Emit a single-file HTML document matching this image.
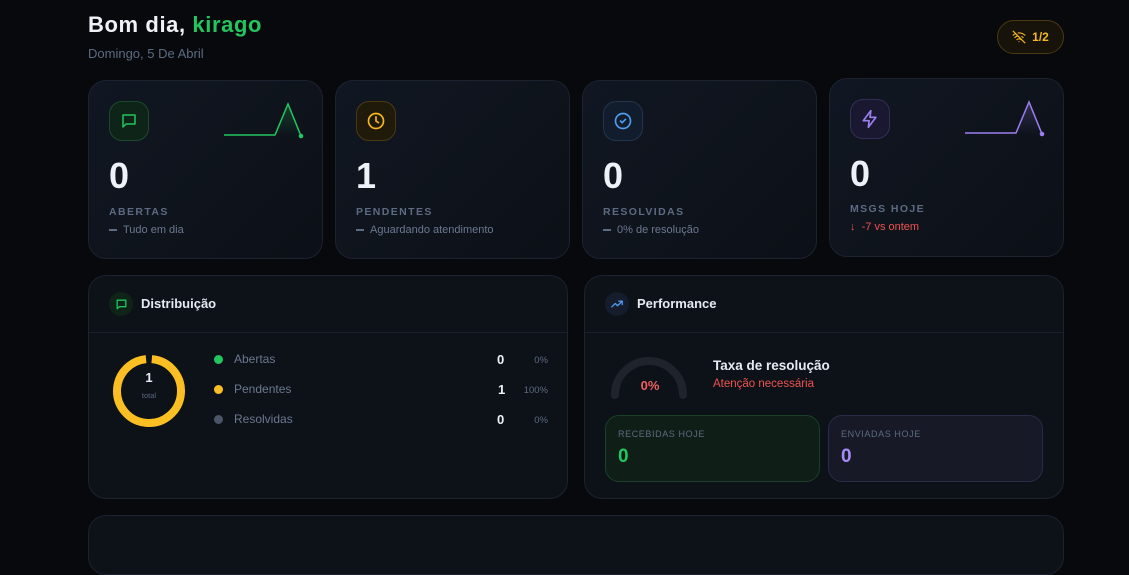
<!DOCTYPE html>
<html><head><meta charset="utf-8"><style>
*{box-sizing:border-box;margin:0;padding:0}
body{width:1129px;height:533px;overflow:hidden;background:#07090d;font-family:"Liberation Sans",sans-serif;color:#e8edf5;position:relative}
.abs{position:absolute}
.card{position:absolute;background:linear-gradient(135deg,#111722,#0c1017);border:1px solid #1c2230;border-radius:18px}
.ib{position:absolute;left:20px;top:20px;width:40px;height:40px;border-radius:13px;display:flex;align-items:center;justify-content:center}
.num{position:absolute;left:20px;top:74px;font-size:36px;font-weight:bold;color:#eef2f8}
.lbl{position:absolute;left:20px;top:125px;font-size:10.5px;font-weight:bold;letter-spacing:1.4px;color:#5c6b82}
.sub{position:absolute;left:20px;top:143px;font-size:11px;color:#6b7890}
.sub i{display:inline-block;width:8px;height:1.5px;background:#5c6b82;vertical-align:middle;margin-right:6px}
.big{position:absolute;background:#0d1118;border:1px solid #1c2230;border-radius:18px}
.hd{height:57px;border-bottom:1px solid #1a202b;position:relative}
.hic{position:absolute;left:20px;top:16px;width:24px;height:24px;border-radius:12px;display:flex;align-items:center;justify-content:center}
.ht{position:absolute;left:52px;top:20px;font-size:13px;font-weight:bold;color:#e6ebf3}
.lg{position:absolute;font-size:12px;color:#6b7890}
.dot{position:absolute;width:9px;height:9px;border-radius:5px}
.v{position:absolute;font-size:13px;font-weight:bold;color:#eef2f8}
.p{position:absolute;font-size:9.5px;color:#5c6b82;text-align:right;width:40px}
</style></head><body>
<div class="abs" style="left:88px;top:12px;font-size:22px;font-weight:bold;color:#eef2f8;letter-spacing:0.6px">Bom dia, <span style="color:#22c55e">kirago</span></div>
<div class="abs" style="left:88px;top:46px;font-size:13px;color:#5c6b82">Domingo, 5 De Abril</div>
<div class="abs" style="left:997px;top:20px;width:67px;height:34px;border-radius:17px;border:1px solid #4a3a12;background:#17130a;color:#f5b820;font-size:12px;font-weight:bold;display:flex;align-items:center;justify-content:center;gap:6px">
<svg width="14" height="14" viewBox="0 0 24 24" fill="none" stroke="#f5b820" stroke-width="2" stroke-linecap="round"><path d="M2 2l20 20M8.5 16.5a5 5 0 017 0M2 8.8a15 15 0 014.2-2.6M10.7 5.1A15 15 0 0122 8.8M5 12.9a10 10 0 015.2-2.8M16.8 11.3a10 10 0 012.2 1.6M12 20h.01"/></svg>1/2</div>

<div class="card" style="left:88px;top:80px;width:235px;height:179px">
<div class="ib" style="background:#0f2418;border:1px solid #1a4a2c"><svg width="18" height="18" viewBox="0 0 24 24" fill="none" stroke="#22c55e" stroke-width="2" stroke-linejoin="round"><path d="M4 4h16v12H8l-4 4z"/></svg></div>
<svg class="abs" style="left:134px;top:20px" width="82" height="38"><defs><linearGradient id="g1" x1="0" y1="0" x2="0" y2="1"><stop offset="0" stop-color="#22c55e" stop-opacity=".25"/><stop offset="1" stop-color="#22c55e" stop-opacity="0"/></linearGradient></defs><path d="M52 34L65 3L78 35Z" fill="url(#g1)"/><path d="M1 34H52L65 3L78 35" fill="none" stroke="#22c55e" stroke-width="1.5"/><circle cx="78" cy="35" r="2.3" fill="#22c55e"/></svg>
<div class="num">0</div><div class="lbl">ABERTAS</div><div class="sub"><i></i>Tudo em dia</div></div>

<div class="card" style="left:335px;top:80px;width:235px;height:179px">
<div class="ib" style="background:#201a0b;border:1px solid #4a3a12"><svg width="20" height="20" viewBox="0 0 24 24" fill="none" stroke="#f5b820" stroke-width="2" stroke-linecap="round"><circle cx="12" cy="12" r="9"/><path d="M12 7v5l3 2"/></svg></div>
<div class="num">1</div><div class="lbl">PENDENTES</div><div class="sub"><i></i>Aguardando atendimento</div></div>

<div class="card" style="left:582px;top:80px;width:235px;height:179px">
<div class="ib" style="background:#111c2c;border:1px solid #23344e"><svg width="20" height="20" viewBox="0 0 24 24" fill="none" stroke="#4f9cf0" stroke-width="2" stroke-linecap="round"><circle cx="12" cy="12" r="9"/><path d="M9 12l2 2 4-4"/></svg></div>
<div class="num">0</div><div class="lbl">RESOLVIDAS</div><div class="sub"><i></i>0% de resolução</div></div>

<div class="card" style="left:829px;top:78px;width:235px;height:179px">
<div class="ib" style="background:#1a1830;border:1px solid #332e55"><svg width="20" height="20" viewBox="0 0 24 24" fill="none" stroke="#9b7ff0" stroke-width="2" stroke-linejoin="round"><path d="M13 2L4 14h7l-1 8 9-12h-7z"/></svg></div>
<svg class="abs" style="left:134px;top:20px" width="82" height="38"><defs><linearGradient id="g2" x1="0" y1="0" x2="0" y2="1"><stop offset="0" stop-color="#9b7ff0" stop-opacity=".25"/><stop offset="1" stop-color="#9b7ff0" stop-opacity="0"/></linearGradient></defs><path d="M52 34L65 3L78 35Z" fill="url(#g2)"/><path d="M1 34H52L65 3L78 35" fill="none" stroke="#9b7ff0" stroke-width="1.5"/><circle cx="78" cy="35" r="2.3" fill="#9b7ff0"/></svg>
<div class="num">0</div><div class="lbl" style="top:124px">MSGS HOJE</div><div class="sub" style="top:142px;color:#ef5350">↓&nbsp; -7 vs ontem</div></div>

<div class="big" style="left:88px;top:275px;width:480px;height:224px">
<div class="hd"><div class="hic" style="background:#0f2418"><svg width="13" height="13" viewBox="0 0 24 24" fill="none" stroke="#22c55e" stroke-width="2.4" stroke-linejoin="round"><path d="M4 4h16v12H8l-4 4z"/></svg></div><div class="ht">Distribuição</div></div>
<svg class="abs" style="left:21px;top:76px" width="78" height="78"><circle cx="39" cy="39" r="32" fill="none" stroke="#fbbf24" stroke-width="8" stroke-dasharray="195 6" transform="rotate(-85 39 39)"/></svg>
<div class="abs" style="left:21px;top:94px;width:78px;text-align:center;font-size:13px;font-weight:bold">1</div>
<div class="abs" style="left:21px;top:115px;width:78px;text-align:center;font-size:7.5px;color:#5c6b82">total</div>
<div class="dot" style="left:125px;top:79px;background:#22c55e"></div><div class="lg" style="left:145px;top:76px">Abertas</div><div class="v" style="left:408px;top:76px">0</div><div class="p" style="left:419px;top:79px">0%</div>
<div class="dot" style="left:125px;top:109px;background:#fbbf24"></div><div class="lg" style="left:145px;top:106px">Pendentes</div><div class="v" style="left:409px;top:106px">1</div><div class="p" style="left:419px;top:109px">100%</div>
<div class="dot" style="left:125px;top:139px;background:#4b5568"></div><div class="lg" style="left:145px;top:136px">Resolvidas</div><div class="v" style="left:408px;top:136px">0</div><div class="p" style="left:419px;top:139px">0%</div>
</div>

<div class="big" style="left:584px;top:275px;width:480px;height:224px">
<div class="hd"><div class="hic" style="background:#151d2c"><svg width="14" height="14" viewBox="0 0 24 24" fill="none" stroke="#4f9cf0" stroke-width="2.2" stroke-linecap="round" stroke-linejoin="round"><path d="M3 17l6-6 4 4 8-8M15 7h6v6"/></svg></div><div class="ht">Performance</div></div>
<svg class="abs" style="left:24px;top:76px" width="82" height="48"><path d="M6 43A34 34 0 0 1 74 43" fill="none" stroke="#1f232b" stroke-width="8" stroke-linecap="round"/></svg>
<div class="abs" style="left:24px;top:102px;width:82px;text-align:center;font-size:13px;font-weight:bold;color:#f06060">0%</div>
<div class="abs" style="left:128px;top:82px;font-size:13.5px;font-weight:bold;color:#e6ebf3">Taxa de resolução</div>
<div class="abs" style="left:128px;top:102px;font-size:11.5px;color:#ef5350">Atenção necessária</div>
<div class="abs" style="left:20px;top:139px;width:215px;height:67px;border-radius:14px;background:#0f1e17;border:1px solid #18402a">
<div class="abs" style="left:12px;top:13px;font-size:9px;letter-spacing:.6px;color:#5c6b82">RECEBIDAS HOJE</div>
<div class="abs" style="left:12px;top:30px;font-size:19px;font-weight:bold;color:#22c55e">0</div></div>
<div class="abs" style="left:243px;top:139px;width:215px;height:67px;border-radius:14px;background:#171926;border:1px solid #2b2a48">
<div class="abs" style="left:12px;top:13px;font-size:9px;letter-spacing:.6px;color:#5c6b82">ENVIADAS HOJE</div>
<div class="abs" style="left:12px;top:30px;font-size:19px;font-weight:bold;color:#a78bfa">0</div></div>
</div>

<div class="big" style="left:88px;top:515px;width:976px;height:60px"></div>
</body></html>
